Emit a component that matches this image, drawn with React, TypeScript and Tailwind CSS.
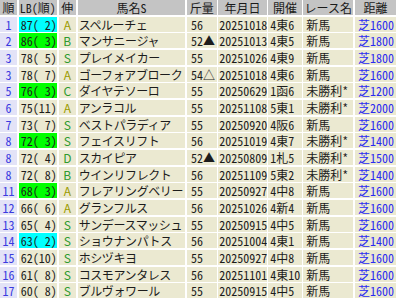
import React from 'react';

type Row = {
  no: string;
  lb: string;
  lbColor?: 'cyan' | 'green';
  nobi: string;
  name: string;
  kin: string;
  date: string;
  kaisai: string;
  race: string;
  dist: string;
};

const rows: Row[] = [
  { no: '1', lb: '87( 2)', lbColor: 'cyan', nobi: 'A', name: 'スペルーチェ', kin: '56', date: '20251018', kaisai: '4東6', race: '新馬', dist: '芝1600' },
  { no: '2', lb: '86( 3)', lbColor: 'green', nobi: 'B', name: 'マンサニージャ', kin: '52▲', date: '20251013', kaisai: '4東5', race: '新馬', dist: '芝1800' },
  { no: '3', lb: '78( 5)', nobi: 'S', name: 'プレイメイカー', kin: '55', date: '20251026', kaisai: '4東9', race: '新馬', dist: '芝1800' },
  { no: '3', lb: '78( 7)', nobi: 'A', name: 'ゴーフォアブローク', kin: '54△', date: '20251018', kaisai: '4東6', race: '新馬', dist: '芝1600' },
  { no: '5', lb: '76( 3)', lbColor: 'green', nobi: 'C', name: 'ダイヤテソーロ', kin: '55', date: '20250629', kaisai: '1函6', race: '未勝利*', dist: '芝1200' },
  { no: '6', lb: '75(11)', nobi: 'A', name: 'アンラコル', kin: '55', date: '20251108', kaisai: '5東1', race: '未勝利*', dist: '芝2000' },
  { no: '7', lb: '73( 7)', nobi: 'S', name: 'ベストパラディア', kin: '55', date: '20250920', kaisai: '4阪6', race: '新馬', dist: '芝1600' },
  { no: '8', lb: '72( 3)', lbColor: 'green', nobi: 'S', name: 'フェイスリフト', kin: '56', date: '20251019', kaisai: '4東7', race: '未勝利*', dist: '芝1400' },
  { no: '8', lb: '72( 4)', nobi: 'D', name: 'スカイピア', kin: '52▲', date: '20250809', kaisai: '1札5', race: '未勝利*', dist: '芝1500' },
  { no: '8', lb: '72( 8)', nobi: 'B', name: 'ウインリフレクト', kin: '56', date: '20251109', kaisai: '5東2', race: '未勝利*', dist: '芝1400' },
  { no: '11', lb: '68( 3)', lbColor: 'green', nobi: 'A', name: 'フレアリングベリー', kin: '55', date: '20250927', kaisai: '4中8', race: '新馬', dist: '芝1600' },
  { no: '12', lb: '66( 6)', nobi: 'A', name: 'グランフルス', kin: '56', date: '20251026', kaisai: '4新4', race: '新馬', dist: '芝1600' },
  { no: '13', lb: '65( 4)', nobi: 'S', name: 'サンデースマッシュ', kin: '55', date: '20250915', kaisai: '4中5', race: '新馬', dist: '芝1600' },
  { no: '14', lb: '63( 2)', lbColor: 'cyan', nobi: 'S', name: 'ショウナンパトス', kin: '56', date: '20251004', kaisai: '4東1', race: '新馬', dist: '芝1400' },
  { no: '15', lb: '62(10)', nobi: 'S', name: 'ホシヅキヨ', kin: '55', date: '20250927', kaisai: '4中8', race: '新馬', dist: '芝1600' },
  { no: '16', lb: '61( 8)', nobi: 'S', name: 'コスモアンタレス', kin: '56', date: '20251101', kaisai: '4東10', race: '新馬', dist: '芝1600' },
  { no: '17', lb: '60( 8)', nobi: 'S', name: 'ブルヴォワール', kin: '55', date: '20250915', kaisai: '4中5', race: '新馬', dist: '芝1600' },
];

const headers = ['順', 'LB(順)', '伸', '馬名S', '斤量', '年月日', '開催', 'レース名', '距離'];

const cell = 'h-[15px] leading-[15px] whitespace-nowrap overflow-hidden';
const beige = 'bg-[#ebe9d1]';
const hw = "[font-feature-settings:'hwid']";

export default function App() {
  return (
    <div className="w-[396px] h-[298px] bg-white overflow-hidden font-['Noto_Sans_CJK_JP',sans-serif] text-[12px] text-[#1c1c1c]">
      <div className="grid grid-cols-[17px_38.33px_17.33px_107.67px_29.67px_48.33px_33.33px_50px_1fr] gap-[1.67px]">
        {/* header */}
        {headers.map((h, i) => (
          <div key={i} className={`${cell} bg-[#c4c4c4] text-center text-[#1a1a1a] ${hw}`}>
            {h}
          </div>
        ))}

        {rows.map((r, i) => (
          <React.Fragment key={i}>
            <div className={`${cell} bg-[#e3e3f7] text-center text-[#3a3ae0] ${hw}`}>{r.no}</div>
            <div
              className={`${cell} whitespace-pre pl-[2px] ${hw} ${
                r.lbColor === 'cyan' ? 'bg-[#00ffff]' : r.lbColor === 'green' ? 'bg-[#00ff00]' : beige
              }`}
            >
              {r.lb}
            </div>
            <div className={`${cell} ${beige} text-center ${r.nobi === 'A' ? 'text-[#9a9a00]' : 'text-[#2e9a2e]'}`}>
              {r.nobi}
            </div>
            <div className={`${cell} ${beige} pl-[1px] tracking-[-0.4px]`}>{r.name}</div>
            <div className={`${cell} ${beige} pl-[4px] ${hw}`}>{r.kin}</div>
            <div className={`${cell} ${beige} pl-[1px] ${hw}`}>{r.date}</div>
            <div className={`${cell} ${beige} pl-[2px] ${hw}`}>{r.kaisai}</div>
            <div className={`${cell} ${beige} pl-[3px] ${hw}`}>{r.race}</div>
            <div className={`${cell} ${beige} pl-[3px] text-[#2b2bf0] ${hw}`}>{r.dist}</div>
          </React.Fragment>
        ))}
      </div>
    </div>
  );
}
